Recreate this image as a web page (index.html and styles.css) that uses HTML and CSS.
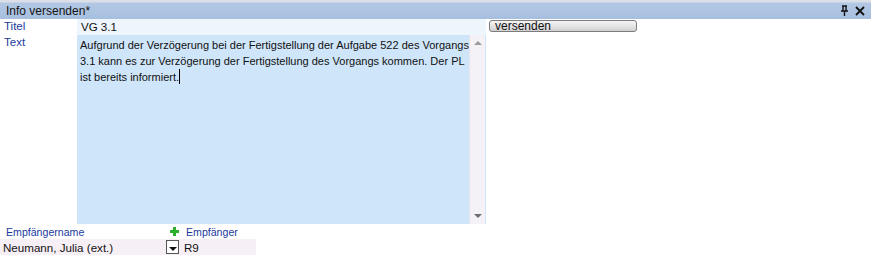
FILE: index.html
```html
<!DOCTYPE html>
<html lang="de">
<head>
    <meta charset="UTF-8">
    <title>Info versenden</title>
    <link rel="stylesheet" href="styles.css">
</head>
<body>
    <div class="panel">
        <div class="titlebar">
            <span class="title">Info versenden*</span>
            <span class="tools">
                <svg width="9" height="11" viewBox="0 0 9 11"><path d="M2 1h5M3 1v5M6 1v5M1 6h7M4.5 6v5" stroke="#111" stroke-width="1.4" fill="none"/></svg>
                <svg width="10" height="10" viewBox="0 0 10 10"><path d="M1 1l8 8M9 1l-8 8" stroke="#111" stroke-width="1.8"/></svg>
            </span>
        </div>

        <div class="row title-row">
            <div class="label">Titel</div>
            <div class="field title-field">VG 3.1</div>
            <button class="send">versenden</button>
        </div>

        <div class="row text-row">
            <div class="label">Text</div>
            <div class="field textarea">
                <div class="content">Aufgrund der Verzögerung bei der Fertigstellung der Aufgabe 522 des Vorgangs<br>3.1 kann es zur Verzögerung der Fertigstellung des Vorgangs kommen. Der PL<br>ist bereits informiert.<span class="caret"></span></div>
                <div class="scrollbar">
                    <span class="arrow up"></span>
                    <span class="arrow down"></span>
                </div>
            </div>
        </div>

        <div class="recipients">
            <div class="rec-head">
                <div class="col-name">Empfängername</div>
                <div class="col-add"><svg width="9" height="9" viewBox="0 0 9 9"><path d="M3 0h3v3h3v3H6v3H3V6H0V3h3z" fill="#2db02d"/></svg></div>
                <div class="col-rec">Empfänger</div>
            </div>
            <div class="rec-row">
                <div class="col-name">Neumann, Julia (ext.)</div>
                <div class="col-add"><span class="drop"></span></div>
                <div class="col-rec">R9</div>
            </div>
        </div>
    </div>
</body>
</html>
```

FILE: styles.css
```css
body {
    margin: 0;
    background: #fff;
    font-family: "Liberation Sans", Arial, sans-serif;
    font-size: 11px;
    color: #111;
}

.panel {
    width: 871px;
    height: 262px;
    overflow: hidden;
}

.titlebar {
    height: 19px;
    display: flex;
    align-items: center;
    justify-content: space-between;
    padding: 0 6px;
    background: linear-gradient(#dcdfe8 0, #dcdfe8 2px, #b2c7e4 3px, #a7bfdf 100%);
    font-size: 12px;
    color: #151515;
}

.title {
    padding-top: 2px;
}

.tools {
    display: flex;
    gap: 6px;
    align-items: center;
    padding-top: 2px;
}

.row {
    display: flex;
}

.label {
    width: 73px;
    padding-left: 4px;
    color: #1b3a9e;
    font-size: 11.5px;
    line-height: 14px;
}

.field {
    width: 409px;
    background: #cfe5f9;
}

.title-row {
    height: 16px;
}

.title-field {
    background: #eef5fc;
    padding-left: 4px;
    width: 405px;
    font-size: 11.5px;
    line-height: 16px;
}

.send {
    margin: 1px 0 0 3px;
    width: 148px;
    height: 12px;
    padding: 0 0 0 5px;
    border: 1px solid #7d7d7d;
    border-radius: 3px;
    background: linear-gradient(#f4f4f4, #e1e1e1 60%, #cfcfcf);
    font-family: inherit;
    font-size: 12px;
    line-height: 10px;
    text-align: left;
    color: #111;
}

.text-row {
    height: 189px;
}

.textarea {
    display: flex;
}

.content {
    flex: 1;
    padding: 2px 0 0 3px;
    font-size: 11px;
    line-height: 16px;
    white-space: nowrap;
}

.caret {
    display: inline-block;
    width: 1px;
    height: 15px;
    background: #000;
    vertical-align: -3px;
}

.scrollbar {
    width: 15px;
    margin-right: 1px;
    background: #f4f2f6;
    border-left: 1px solid #e6e4ea;
    display: flex;
    flex-direction: column;
    justify-content: space-between;
    align-items: center;
    padding: 6px 0 6px;
}

.arrow {
    width: 0;
    height: 0;
    border-left: 4px solid transparent;
    border-right: 4px solid transparent;
}

.arrow.up {
    border-bottom: 4px solid #9a9a9a;
}

.arrow.down {
    border-top: 4px solid #6e6e6e;
}

.rec-head, .rec-row {
    display: flex;
    width: 256px;
    height: 16px;
    align-items: center;
}

.rec-head {
    height: 15px;
    color: #1b3a9e;
    font-size: 10.6px;
}

.rec-row {
    background: #f7eff6;
    font-size: 11.6px;
}

.col-name {
    width: 163px;
    padding-left: 3px;
}

.rec-head .col-name {
    padding-left: 6px;
    width: 160px;
}

.col-add {
    width: 17px;
}

.rec-head .col-add {
    padding-left: 4px;
    width: 15px;
}

.drop {
    display: block;
    width: 11px;
    height: 12px;
    border: 1px solid #555;
    background: #fff;
    position: relative;
}

.drop::after {
    content: "";
    position: absolute;
    left: 2px;
    top: 6px;
    border-left: 4px solid transparent;
    border-right: 4px solid transparent;
    border-top: 4px solid #111;
}

.col-rec {
    padding-left: 1px;
}
```
